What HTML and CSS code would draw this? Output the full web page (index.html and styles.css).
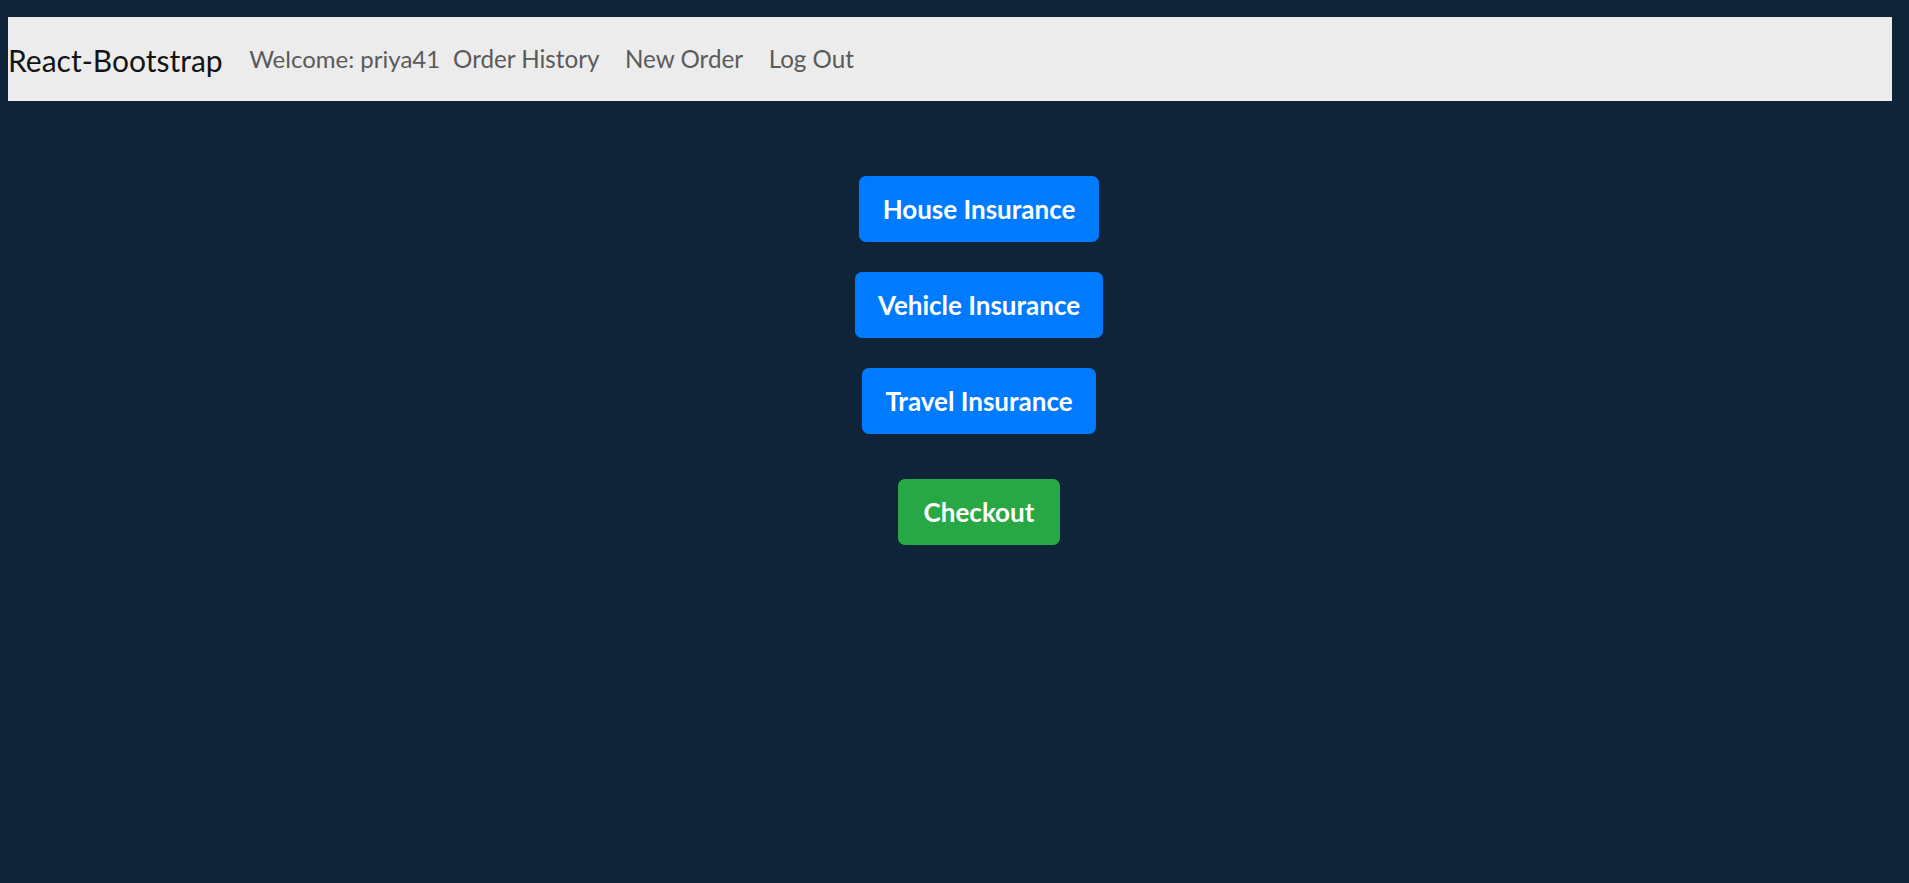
FILE: index.html
```html
<!DOCTYPE html>
<html>
<head>
<meta charset="utf-8">
<link rel="stylesheet" href="styles.css">
</head>
<body>
<nav class="navbar">
  <a class="brand" href="#">React-Bootstrap</a>
  <span class="nav-text">Welcome: priya41</span>
  <a class="nav-link" href="#">Order History</a>
  <a class="nav-link" href="#">New Order</a>
  <a class="nav-link" href="#">Log Out</a>
</nav>
<main class="content">
  <div class="choices">
    <button class="btn btn-primary">House Insurance</button>
    <button class="btn btn-primary">Vehicle Insurance</button>
    <button class="btn btn-primary">Travel Insurance</button>
  </div>
  <button class="btn btn-success">Checkout</button>
</main>
</body>
</html>
```
FILE: styles.css
```css
html, body {
  margin: 0;
  padding: 0;
}
body {
  background: #0f2439;
  font-family: Lato, "Open Sans", sans-serif;
  min-height: 883px;
  padding: 17px 17px 0 8px;
  box-sizing: border-box;
}
.navbar {
  display: flex;
  align-items: center;
  height: 84px;
  background: #ececec;
  box-sizing: border-box;
}
.brand {
  font-size: 30px;
  line-height: 1.5;
  color: #141414;
  text-decoration: none;
  margin-right: 26.5px;
  padding-top: 2px;
}
.nav-text {
  font-size: 24px;
  line-height: 1.5;
  color: #5a5a5a;
  margin-right: 0;
}
.nav-link {
  font-size: 24.2px;
  line-height: 1.5;
  color: #5a5a5a;
  text-decoration: none;
  padding: 0 12.8px;
}
.content {
  display: flex;
  flex-direction: column;
  align-items: center;
  padding-top: 75px;
  padding-left: 58px;
}
.choices {
  display: flex;
  flex-direction: column;
  align-items: center;
  gap: 30px;
  margin-bottom: 45px;
}
.btn {
  font-family: Lato, "Open Sans", sans-serif;
  font-weight: 700;
  font-size: 26px;
  line-height: 1.5;
  color: #fff;
  border: 1.4px solid transparent;
  border-radius: 6.7px;
  padding: 12px 22.4px;
  height: 66px;
  box-sizing: border-box;
  cursor: pointer;
}
.btn-primary {
  background: #007bff;
  border-color: #007bff;
}
.btn-success {
  background: #28a745;
  border-color: #28a745;
  padding: 12px 25px;
}
```
